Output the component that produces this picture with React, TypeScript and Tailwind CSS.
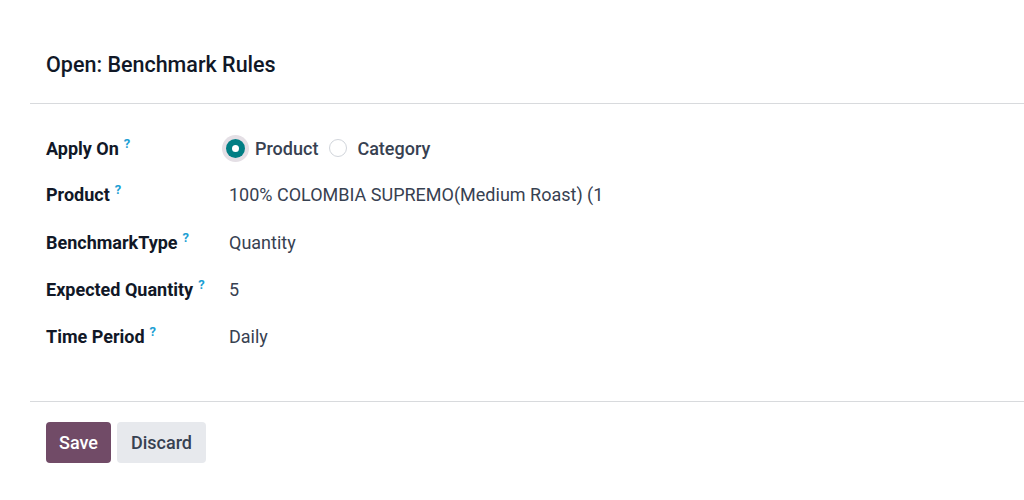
import React from "react";

const fields = [
  { label: "Product", value: "100% COLOMBIA SUPREMO(Medium Roast) (1" },
  { label: "BenchmarkType", value: "Quantity" },
  { label: "Expected Quantity", value: "5" },
  { label: "Time Period", value: "Daily" },
];

const Help = () => (
  <sup className="ml-[5px] text-[13px] font-bold text-[#1c9fd4] relative -top-[7px]">?</sup>
);

export default function App() {
  return (
    <div className="h-[500px] w-[1024px] bg-white font-['Roboto',sans-serif] text-[#374151]">
      <div className="ml-[30px]">
        <div className="h-[104px] border-b border-[#d8dadd] pl-4 flex items-end pb-[24px]">
          <h4 className="text-[21.5px] leading-[28px] font-medium text-[#111827]">Open: Benchmark Rules</h4>
        </div>
        <div className="h-[298px] border-b border-[#d8dadd] pl-4 pt-[28px]">
          <div className="flex items-center h-[32px]">
            <div className="w-[183px] text-[18px] font-bold text-[#111827]">
              Apply On<Help />
            </div>
            <div className="flex items-center text-[18px] font-medium text-[#374151]">
              <span className="w-[27px] h-[27px] rounded-full bg-[#e4dfe5] flex items-center justify-center -ml-[7px]">
                <span className="w-[19px] h-[19px] rounded-full bg-[#017e84] flex items-center justify-center">
                  <span className="w-[7px] h-[7px] rounded-full bg-white" />
                </span>
              </span>
              <span className="ml-[6px]">Product</span>
              <span className="ml-[11px] w-[18px] h-[18px] rounded-full border border-[#d1d5db]" />
              <span className="ml-[10px]">Category</span>
            </div>
          </div>
          {fields.map((f) => (
            <div key={f.label} className="flex items-center h-[47.4px] pt-[14px]">
              <div className="w-[183px] text-[18px] font-bold text-[#111827]">
                {f.label}<Help />
              </div>
              <div className="text-[18px] text-[#374151]">{f.value}</div>
            </div>
          ))}
        </div>
        <div className="pl-4 pt-[20px] flex gap-[6px]">
          <button className="h-[41px] px-[13px] rounded-[4px] bg-[#714b67] text-white text-[18px] font-medium">Save</button>
          <button className="h-[41px] px-[14px] rounded-[4px] bg-[#e7e9ed] text-[#374151] text-[18px] font-medium">Discard</button>
        </div>
      </div>
    </div>
  );
}
